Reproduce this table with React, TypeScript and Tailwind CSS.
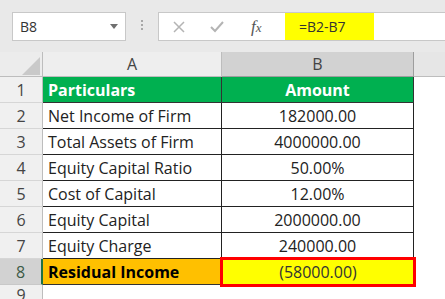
import React from "react";

type Row = {
  n: number;
  label: string;
  value: string;
  kind?: "head" | "result";
};

const rows: Row[] = [
  { n: 1, label: "Particulars", value: "Amount", kind: "head" },
  { n: 2, label: "Net Income of Firm", value: "182000.00" },
  { n: 3, label: "Total Assets of Firm", value: "4000000.00" },
  { n: 4, label: "Equity Capital Ratio", value: "50.00%" },
  { n: 5, label: "Cost of Capital", value: "12.00%" },
  { n: 6, label: "Equity Capital", value: "2000000.00" },
  { n: 7, label: "Equity Charge", value: "240000.00" },
  { n: 8, label: "Residual Income", value: "(58000.00)", kind: "result" },
];

function FormulaBar() {
  return (
    <div className="flex h-[52px] items-start bg-[#e9e9e9] pt-[12px] pl-[12px]">
      <div className="flex h-[29px] w-[114px] items-center justify-between border border-[#c8c8c8] bg-white pl-[7px] pr-[7px]">
        <span className="text-[14px] text-[#333]">B8</span>
        <svg width="8" height="5" viewBox="0 0 8 5">
          <path d="M0 0h8L4 5z" fill="#6f6f6f" />
        </svg>
      </div>
      <div className="ml-[15px] mt-[8px] flex flex-col gap-[2px]">
        <span className="h-[2px] w-[2px] bg-[#a8a8a8]" />
        <span className="h-[2px] w-[2px] bg-[#a8a8a8]" />
        <span className="h-[2px] w-[2px] bg-[#a8a8a8]" />
      </div>
      <div className="ml-[15px] flex h-[29px] flex-1 items-center border border-r-0 border-[#c8c8c8] bg-white">
        <div className="flex w-[126px] items-center">
          <svg className="ml-[14px]" width="12" height="12" viewBox="0 0 12 12">
            <path d="M1 1l10 10M11 1L1 11" stroke="#b4b4b4" strokeWidth="1.5" />
          </svg>
          <svg className="ml-[25px]" width="14" height="12" viewBox="0 0 14 12">
            <path d="M1 6l4 4 8-9" stroke="#b4b4b4" strokeWidth="2" fill="none" />
          </svg>
          <span className="ml-[27px] font-['Liberation_Serif',serif] text-[17px] leading-none italic text-[#555]">
            f<span className="text-[13px]">x</span>
          </span>
        </div>
        <div className="flex h-full w-[89px] items-center bg-[#ffff00] pl-[14px] text-[14px] text-[#333]">
          =B2-B7
        </div>
      </div>
    </div>
  );
}

function Corner() {
  return (
    <div className="flex items-end justify-end border-r border-b border-[#bdbdbd] bg-[#ececec] pr-[2px] pb-[1px]">
      <svg width="18" height="18" viewBox="0 0 18 18">
        <path d="M18 0v18H0z" fill="#c9c9c9" />
      </svg>
    </div>
  );
}

export default function App() {
  return (
    <div className="h-[299px] w-[445px] overflow-hidden bg-white font-['Open_Sans','Lato',sans-serif]">
      <FormulaBar />
      <div className="grid grid-cols-[43px_179px_192px_1fr] grid-rows-[25px_repeat(8,26px)_20px]">
        <Corner />
        <div className="flex items-center justify-center border-r border-b border-[#bdbdbd] bg-[#eeeeee] text-[16px] text-[#444]">
          A
        </div>
        <div className="flex items-center justify-center border-r border-b border-[#9e9e9e] bg-[#d2d2d2] text-[16px] text-[#444]">
          B
        </div>
        <div className="border-b border-[#bdbdbd] bg-[#e6e6e6]" />

        {rows.map((r) => {
          const isHead = r.kind === "head";
          const isResult = r.kind === "result";
          return (
            <React.Fragment key={r.n}>
              <div
                className={
                  isResult
                    ? "flex items-center justify-center border-r-2 border-b border-r-[#1e7145] border-b-[#c8c8c8] bg-[#d2d2d2] text-[16px] text-[#3c5a46]"
                    : "flex items-center justify-center border-r border-b border-r-[#bdbdbd] border-b-[#d6d6d6] bg-[#f0f0f0] text-[16px] text-[#444]"
                }
              >
                {r.n}
              </div>
              <div
                className={
                  isHead
                    ? "flex items-center border-r border-b border-[#333] bg-[#00b050] pl-[5px] text-[16px] font-bold text-white"
                    : isResult
                      ? "flex items-center border-r border-b border-[#333] bg-[#ffc000] pl-[5px] text-[16px] font-bold text-black"
                      : "flex items-center border-r border-b border-[#222] pl-[5px] text-[16px] text-[#222]"
                }
              >
                {r.label}
              </div>
              <div
                className={
                  isHead
                    ? "flex items-center justify-center border-r border-b border-[#333] bg-[#00b050] text-[16px] font-bold text-white"
                    : isResult
                      ? "relative z-10 flex items-center justify-center bg-[#ffff00] text-[16px] text-[#333] outline-[3px] -outline-offset-1 outline-[#ff0000]"
                      : "flex items-center justify-center border-r border-b border-[#222] text-[16px] text-[#222]"
                }
              >
                {r.value}
              </div>
              <div className="bg-white" />
            </React.Fragment>
          );
        })}

        <div className="flex items-start justify-center border-r border-[#bdbdbd] bg-[#f0f0f0] text-[16px] leading-[20px] text-[#444]">
          9
        </div>
        <div />
        <div />
        <div />
      </div>
    </div>
  );
}
